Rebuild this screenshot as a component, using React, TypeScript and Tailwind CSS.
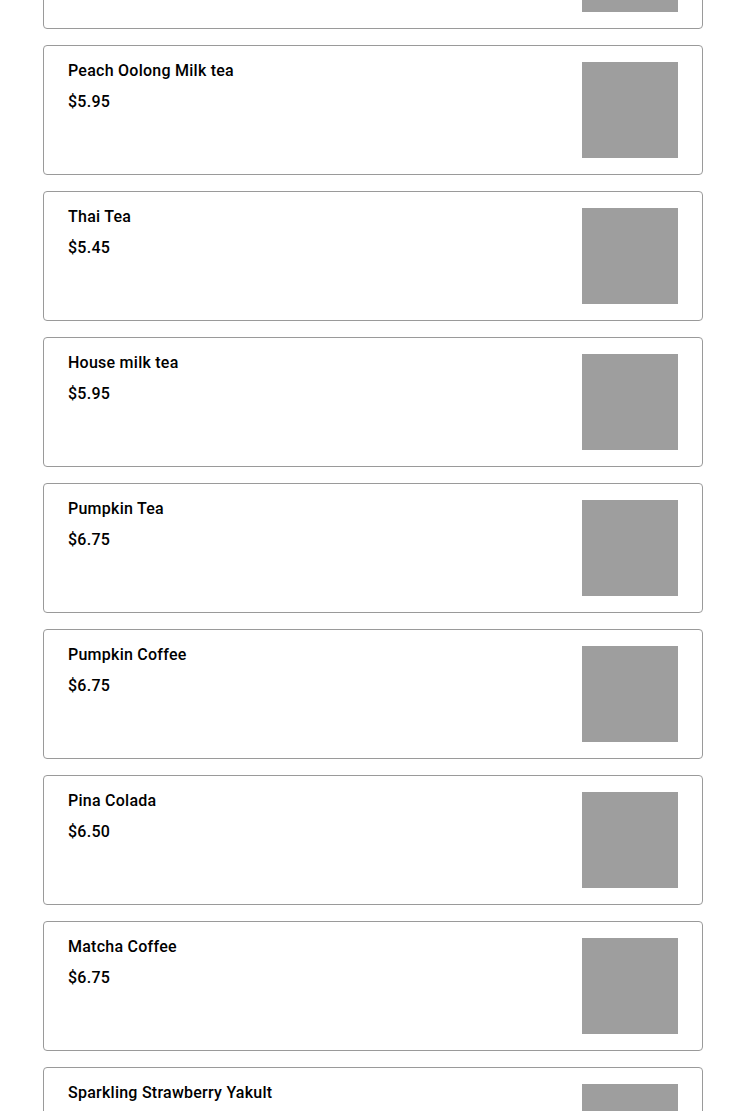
import React from 'react';

interface MenuItem {
  name: string;
  price: string;
}

const items: MenuItem[] = [
  { name: 'Brown Sugar Milk Tea', price: '$5.95' },
  { name: 'Peach Oolong Milk tea', price: '$5.95' },
  { name: 'Thai Tea', price: '$5.45' },
  { name: 'House milk tea', price: '$5.95' },
  { name: 'Pumpkin Tea', price: '$6.75' },
  { name: 'Pumpkin Coffee', price: '$6.75' },
  { name: 'Pina Colada', price: '$6.50' },
  { name: 'Matcha Coffee', price: '$6.75' },
  { name: 'Sparkling Strawberry Yakult', price: '$6.50' },
];

const ItemCard: React.FC<{ item: MenuItem }> = ({ item }) => (
  <div className="flex justify-between border border-[#9a9a9a] rounded-[4px] bg-white px-6 py-4">
    <div className="flex flex-col">
      <p className="text-[16px] leading-5 font-medium tracking-[0.25px] text-black -mt-[1px]">{item.name}</p>
      <p className="text-[16px] leading-5 font-medium tracking-[0.25px] text-black mt-[11px]">{item.price}</p>
    </div>
    <div className="w-24 h-24 bg-[#9e9e9e] shrink-0" />
  </div>
);

export default function App() {
  return (
    <div className="h-[1111px] overflow-hidden bg-white" style={{ fontFamily: 'Roboto, "Liberation Sans", sans-serif' }}>
      <div className="ml-[43px] w-[660px] -mt-[101px] flex flex-col gap-4">
        {items.map(item => (
          <ItemCard key={item.name} item={item} />
        ))}
      </div>
    </div>
  );
}
